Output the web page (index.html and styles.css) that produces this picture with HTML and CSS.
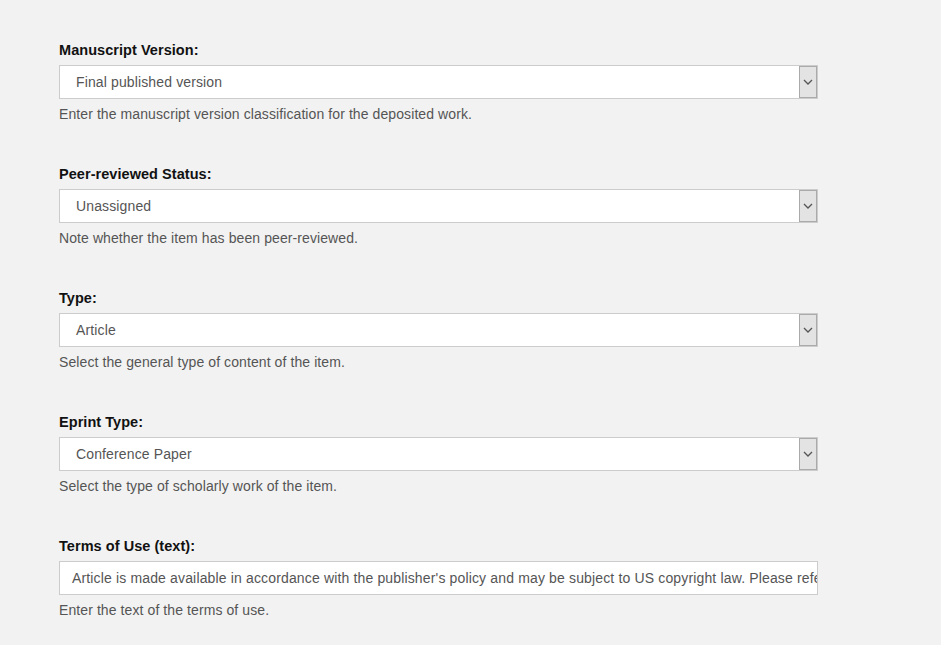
FILE: index.html
```html
<!DOCTYPE html>
<html lang="en">
<head>
<meta charset="utf-8">
<title>Deposit form</title>
<link rel="stylesheet" href="styles.css">
</head>
<body>
<form class="form">
  <div class="field">
    <label class="label">Manuscript Version:</label>
    <div class="select"><span class="value">Final published version</span><span class="arrow"><svg width="10" height="6" viewBox="0 0 10 6"><path d="M1 1 L5 5 L9 1" fill="none" stroke="#555" stroke-width="1.3"/></svg></span></div>
    <div class="help">Enter the manuscript version classification for the deposited work.</div>
  </div>
  <div class="field">
    <label class="label">Peer-reviewed Status:</label>
    <div class="select"><span class="value">Unassigned</span><span class="arrow"><svg width="10" height="6" viewBox="0 0 10 6"><path d="M1 1 L5 5 L9 1" fill="none" stroke="#555" stroke-width="1.3"/></svg></span></div>
    <div class="help">Note whether the item has been peer-reviewed.</div>
  </div>
  <div class="field">
    <label class="label">Type:</label>
    <div class="select"><span class="value">Article</span><span class="arrow"><svg width="10" height="6" viewBox="0 0 10 6"><path d="M1 1 L5 5 L9 1" fill="none" stroke="#555" stroke-width="1.3"/></svg></span></div>
    <div class="help">Select the general type of content of the item.</div>
  </div>
  <div class="field">
    <label class="label">Eprint Type:</label>
    <div class="select"><span class="value">Conference Paper</span><span class="arrow"><svg width="10" height="6" viewBox="0 0 10 6"><path d="M1 1 L5 5 L9 1" fill="none" stroke="#555" stroke-width="1.3"/></svg></span></div>
    <div class="help">Select the type of scholarly work of the item.</div>
  </div>
  <div class="field">
    <label class="label">Terms of Use (text):</label>
    <div class="input"><span class="text">Article is made available in accordance with the publisher's policy and may be subject to US copyright law. Please refer to the publisher's site for terms of use.</span></div>
    <div class="help">Enter the text of the terms of use.</div>
  </div>
</form>
</body>
</html>
```
FILE: styles.css
```css
html, body {
  margin: 0;
  padding: 0;
  background: #f2f2f2;
}
body {
  font-family: "Liberation Sans", Arial, sans-serif;
  font-size: 14px;
  letter-spacing: 0.09px;
  color: #555;
}
.form {
  padding: 42px 0 0 59px;
  width: 759px;
  display: flex;
  flex-direction: column;
  gap: 44px;
}
.field {
  display: flex;
  flex-direction: column;
}
.label {
  font-weight: bold;
  font-size: 14.5px;
  letter-spacing: 0.05px;
  color: #111;
  line-height: 16px;
  margin-bottom: 7px;
}
.select, .input {
  box-sizing: border-box;
  height: 34px;
  border: 1px solid #cccccc;
  background: #fff;
  display: flex;
  align-items: center;
  overflow: hidden;
}
.value {
  flex: 1;
  padding-left: 16px;
  letter-spacing: 0.13px;
  color: #555;
}
.arrow {
  box-sizing: border-box;
  width: 18px;
  height: 32px;
  background: #e3e3e3;
  border: 1px solid #aaaaaa;
  display: flex;
  align-items: center;
  justify-content: center;
}
.input {
  padding: 0 0 0 12px;
}
.text {
  white-space: nowrap;
  letter-spacing: 0.15px;
  color: #555;
}
.help {
  line-height: 16px;
  margin-top: 7px;
  color: #555;
}
```
